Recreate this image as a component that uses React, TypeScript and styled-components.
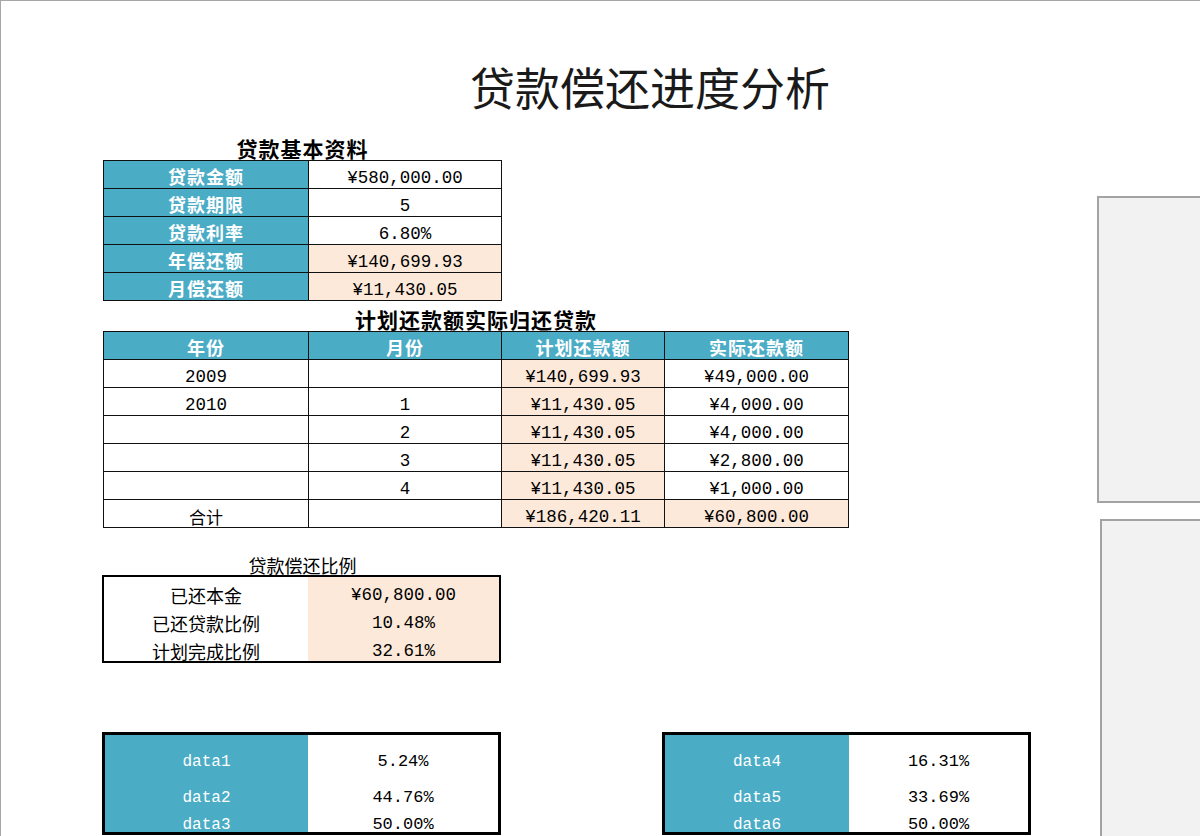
import React from "react";
import styled, { createGlobalStyle, css } from "styled-components";

const GlobalStyle = createGlobalStyle`
  html, body { margin: 0; padding: 0; background: #ffffff; }
  * { box-sizing: border-box; }
`;

const BLUE = "#4bacc6";
const PEACH = "#fde9d9";
const CJK = `"Noto Sans CJK SC", "Noto Sans", sans-serif`;
const MONO = `"Liberation Mono", "Noto Sans CJK SC", monospace`;

const Page = styled.div`
  width: 1200px;
  height: 836px;
  overflow: hidden;
  border-top: 1px solid #a6a6a6;
  border-left: 1px solid #a6a6a6;
  display: flex;
  font-family: ${CJK};
  color: #000;
`;

const Main = styled.div`
  flex: 0 0 1096px;
  display: flex;
  flex-direction: column;
  align-items: flex-start;
  padding-left: 101px;
`;

const Side = styled.div`
  flex: 1;
  display: flex;
  flex-direction: column;
  padding-top: 195px;
  min-width: 0;
`;

const ChartPanel = styled.div<{ $height: number; $offset: number; $gap: number }>`
  width: 200px;
  height: ${(p) => p.$height}px;
  margin-left: ${(p) => p.$offset}px;
  margin-top: ${(p) => p.$gap}px;
  background: #f2f2f2;
  border: 2px solid #a3a3a3;
  flex-shrink: 0;
`;

const Title = styled.h1`
  margin: 63px 0 0 368px;
  font-family: ${CJK};
  font-size: 45px;
  line-height: 45px;
  font-weight: 400;
  color: #1a1a1a;
  white-space: nowrap;
`;

const SectionTitle = styled.div<{ $width: number; $top: number; $bold?: boolean }>`
  width: ${(p) => p.$width}px;
  margin-top: ${(p) => p.$top}px;
  margin-left: 1px;
  text-align: center;
  white-space: nowrap;
  ${(p) =>
    p.$bold
      ? css`
          font-size: 21px;
          line-height: 22px;
          font-weight: 700;
          letter-spacing: 1px;
        `
      : css`
          font-size: 18px;
          line-height: 18px;
          font-weight: 400;
        `}
`;

const Grid = styled.div<{ $cols: string }>`
  display: grid;
  grid-template-columns: ${(p) => p.$cols};
  grid-auto-rows: 27px;
  gap: 1px;
  padding: 1px;
  background: #111;
  margin-left: 1px;
  margin-top: 1px;
`;

type Kind = "head" | "plain" | "peach";

const Cell = styled.div<{ $kind: Kind; $mono?: boolean }>`
  display: flex;
  justify-content: center;
  align-items: flex-end;
  white-space: nowrap;
  line-height: 20px;
  padding-bottom: ${(p) => (p.$kind === "head" ? 2 : 0)}px;
  background: ${(p) => (p.$kind === "head" ? BLUE : p.$kind === "peach" ? PEACH : "#ffffff")};
  color: ${(p) => (p.$kind === "head" ? "#ffffff" : "#000000")};
  font-family: ${(p) => (p.$mono ? MONO : CJK)};
  font-size: ${(p) => (p.$mono ? "17.5px" : p.$kind === "head" ? "18px" : "17px")};
  font-weight: ${(p) => (p.$kind === "head" ? 700 : 400)};
  letter-spacing: ${(p) => (p.$kind === "head" ? "1px" : "0")};
`;

const RatioBox = styled.div`
  margin-top: 1px;
  width: 399px;
  height: 88px;
  border: 2px solid #000;
  display: grid;
  grid-template-columns: 204px 191px;
  grid-auto-rows: 28px;
  overflow: hidden;
`;

const RatioCell = styled.div<{ $peach?: boolean; $mono?: boolean }>`
  display: flex;
  justify-content: center;
  align-items: flex-end;
  line-height: 20px;
  white-space: nowrap;
  background: ${(p) => (p.$peach ? PEACH : "#ffffff")};
  font-family: ${(p) => (p.$mono ? MONO : CJK)};
  font-size: ${(p) => (p.$mono ? "17.5px" : "18px")};
`;

const BottomRow = styled.div`
  margin-top: 69px;
  display: flex;
  gap: 161px;
`;

const DataBox = styled.div<{ $width: number; $split: number }>`
  width: ${(p) => p.$width}px;
  height: 103px;
  border: 3px solid #000;
  display: grid;
  grid-template-columns: ${(p) => `${p.$split}px 1fr`};
  grid-template-rows: 46px 36px 27px;
  overflow: hidden;
  background: linear-gradient(
    to right,
    ${BLUE} 0,
    ${BLUE} ${(p) => p.$split}px,
    #ffffff ${(p) => p.$split}px
  );
`;

const DataCell = styled.div<{ $label?: boolean }>`
  display: flex;
  justify-content: center;
  align-items: flex-end;
  padding-bottom: 11px;
  line-height: 16px;
  white-space: nowrap;
  font-family: ${MONO};
  font-size: ${(p) => (p.$label ? "16px" : "17px")};
  color: ${(p) => (p.$label ? "#ffffff" : "#000000")};
`;

const basicInfo: [string, string, Kind][] = [
  ["贷款金额", "¥580,000.00", "plain"],
  ["贷款期限", "5", "plain"],
  ["贷款利率", "6.80%", "plain"],
  ["年偿还额", "¥140,699.93", "peach"],
  ["月偿还额", "¥11,430.05", "peach"],
];

const plan: [string, string, string, string, boolean][] = [
  ["2009", "", "¥140,699.93", "¥49,000.00", false],
  ["2010", "1", "¥11,430.05", "¥4,000.00", false],
  ["", "2", "¥11,430.05", "¥4,000.00", false],
  ["", "3", "¥11,430.05", "¥2,800.00", false],
  ["", "4", "¥11,430.05", "¥1,000.00", false],
  ["合计", "", "¥186,420.11", "¥60,800.00", true],
];

const ratios: [string, string][] = [
  ["已还本金", "¥60,800.00"],
  ["已还贷款比例", "10.48%"],
  ["计划完成比例", "32.61%"],
];

const dataLeft: [string, string][] = [
  ["data1", "5.24%"],
  ["data2", "44.76%"],
  ["data3", "50.00%"],
];
const dataRight: [string, string][] = [
  ["data4", "16.31%"],
  ["data5", "33.69%"],
  ["data6", "50.00%"],
];

export default function App() {
  return (
    <>
      <GlobalStyle />
      <Page>
        <Main>
          <Title>贷款偿还进度分析</Title>

          <SectionTitle $width={399} $top={28} $bold>
            贷款基本资料
          </SectionTitle>
          <Grid $cols="204px 192px">
            {basicInfo.map(([label, value, kind]) => (
              <React.Fragment key={label}>
                <Cell $kind="head">{label}</Cell>
                <Cell $kind={kind} $mono>
                  {value}
                </Cell>
              </React.Fragment>
            ))}
          </Grid>

          <SectionTitle $width={746} $top={7} $bold>
            计划还款额实际归还贷款
          </SectionTitle>
          <Grid $cols="204px 192px 162px 183px">
            <Cell $kind="head">年份</Cell>
            <Cell $kind="head">月份</Cell>
            <Cell $kind="head">计划还款额</Cell>
            <Cell $kind="head">实际还款额</Cell>
            {plan.map(([year, month, planned, actual, total], i) => (
              <React.Fragment key={i}>
                <Cell $kind="plain" $mono={!total}>
                  {year}
                </Cell>
                <Cell $kind="plain" $mono>
                  {month}
                </Cell>
                <Cell $kind="peach" $mono>
                  {planned}
                </Cell>
                <Cell $kind={total ? "peach" : "plain"} $mono>
                  {actual}
                </Cell>
              </React.Fragment>
            ))}
          </Grid>

          <SectionTitle $width={399} $top={28}>
            贷款偿还比例
          </SectionTitle>
          <RatioBox>
            {ratios.map(([label, value]) => (
              <React.Fragment key={label}>
                <RatioCell>{label}</RatioCell>
                <RatioCell $peach $mono>
                  {value}
                </RatioCell>
              </React.Fragment>
            ))}
          </RatioBox>

          <BottomRow>
            <DataBox $width={399} $split={203}>
              {dataLeft.map(([label, value]) => (
                <React.Fragment key={label}>
                  <DataCell $label>{label}</DataCell>
                  <DataCell>{value}</DataCell>
                </React.Fragment>
              ))}
            </DataBox>
            <DataBox $width={369} $split={184}>
              {dataRight.map(([label, value]) => (
                <React.Fragment key={label}>
                  <DataCell $label>{label}</DataCell>
                  <DataCell>{value}</DataCell>
                </React.Fragment>
              ))}
            </DataBox>
          </BottomRow>
        </Main>
        <Side>
          <ChartPanel $height={307} $offset={0} $gap={0} />
          <ChartPanel $height={400} $offset={3} $gap={16} />
        </Side>
      </Page>
    </>
  );
}
